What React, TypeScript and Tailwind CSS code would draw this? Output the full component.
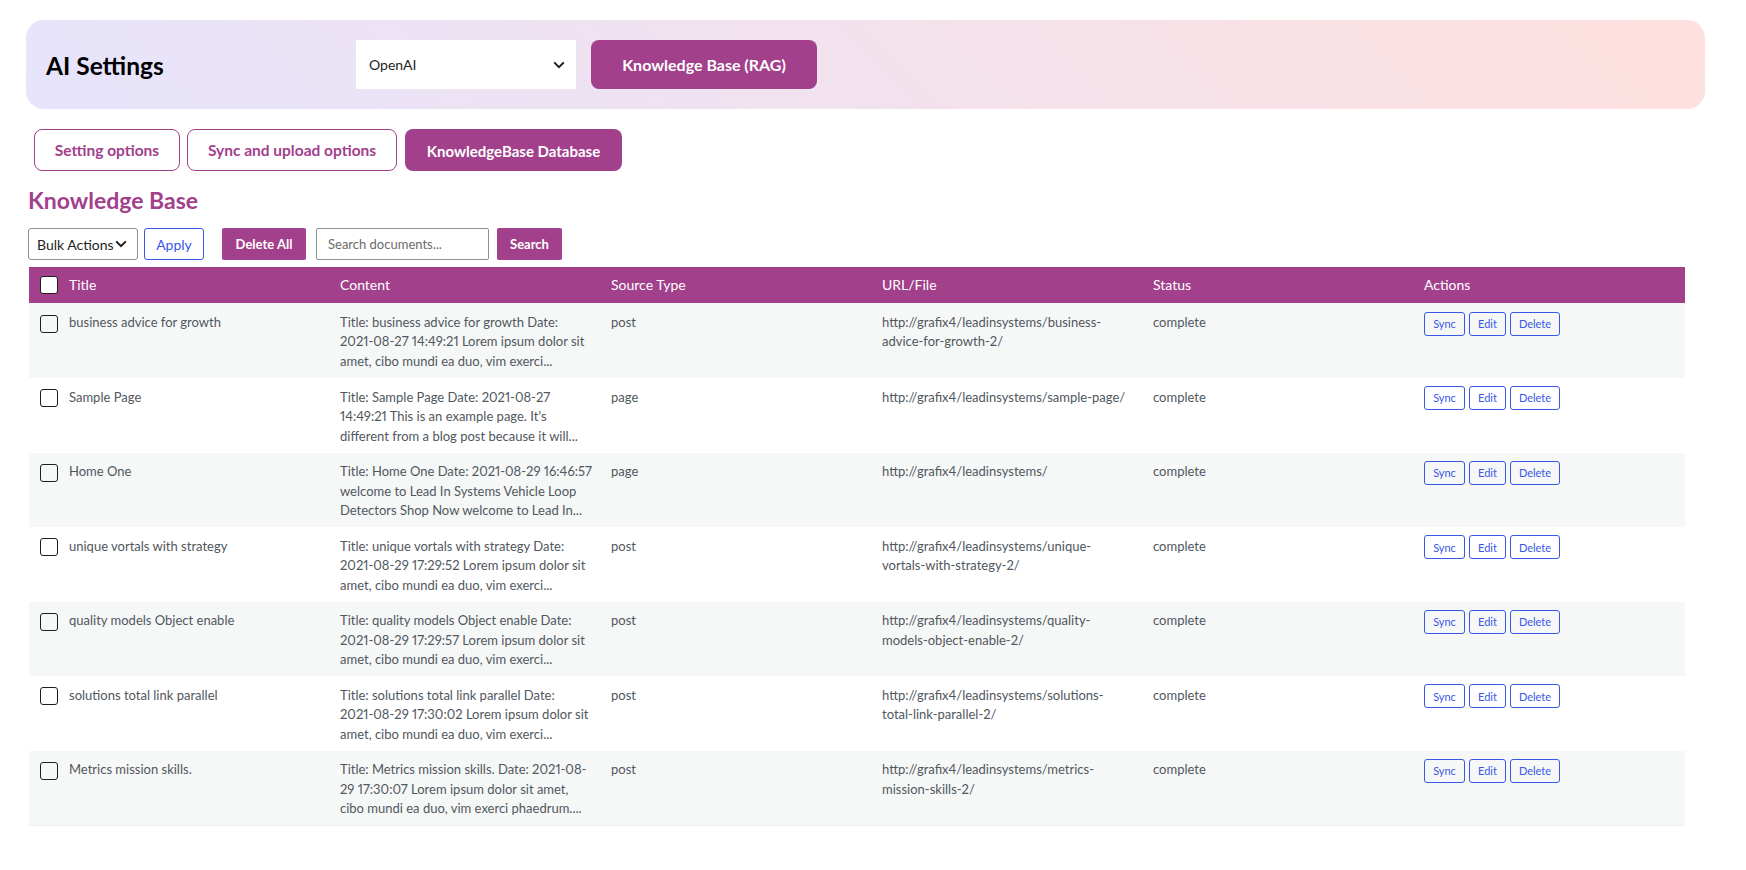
import React from "react";

const rows = [
  {
    title: "business advice for growth",
    content: ["Title: business advice for growth Date:", "2021-08-27 14:49:21 Lorem ipsum dolor sit", "amet, cibo mundi ea duo, vim exerci..."],
    type: "post",
    url: ["http://grafix4/leadinsystems/business-", "advice-for-growth-2/"],
  },
  {
    title: "Sample Page",
    content: ["Title: Sample Page Date: 2021-08-27", "14:49:21 This is an example page. It's", "different from a blog post because it will..."],
    type: "page",
    url: ["http://grafix4/leadinsystems/sample-page/"],
  },
  {
    title: "Home One",
    content: ["Title: Home One Date: 2021-08-29 16:46:57", "welcome to Lead In Systems Vehicle Loop", "Detectors Shop Now welcome to Lead In..."],
    type: "page",
    url: ["http://grafix4/leadinsystems/"],
  },
  {
    title: "unique vortals with strategy",
    content: ["Title: unique vortals with strategy Date:", "2021-08-29 17:29:52 Lorem ipsum dolor sit", "amet, cibo mundi ea duo, vim exerci..."],
    type: "post",
    url: ["http://grafix4/leadinsystems/unique-", "vortals-with-strategy-2/"],
  },
  {
    title: "quality models Object enable",
    content: ["Title: quality models Object enable Date:", "2021-08-29 17:29:57 Lorem ipsum dolor sit", "amet, cibo mundi ea duo, vim exerci..."],
    type: "post",
    url: ["http://grafix4/leadinsystems/quality-", "models-object-enable-2/"],
  },
  {
    title: "solutions total link parallel",
    content: ["Title: solutions total link parallel Date:", "2021-08-29 17:30:02 Lorem ipsum dolor sit", "amet, cibo mundi ea duo, vim exerci..."],
    type: "post",
    url: ["http://grafix4/leadinsystems/solutions-", "total-link-parallel-2/"],
  },
  {
    title: "Metrics mission skills.",
    content: ["Title: Metrics mission skills. Date: 2021-08-", "29 17:30:07 Lorem ipsum dolor sit amet,", "cibo mundi ea duo, vim exerci phaedrum...."],
    type: "post",
    url: ["http://grafix4/leadinsystems/metrics-", "mission-skills-2/"],
  },
];

const Chevron: React.FC<{ className: string }> = ({ className }) => (
  <svg viewBox="0 0 12 8" fill="none" stroke="currentColor" strokeWidth="2" className={className}>
    <path d="M1.2 1.4 6 6.2l4.8-4.8" />
  </svg>
);

const Checkbox: React.FC<{ white?: boolean }> = ({ white }) => (
  <span className={`block w-[18px] h-[18px] rounded-[3px] border border-[#1e1e1e] ${white ? "bg-white" : "bg-transparent"}`} />
);

const ActionButton: React.FC<{ label: string; width: string }> = ({ label, width }) => (
  <button className={`${width} h-6 rounded-[3px] border border-[#3858e9] bg-transparent text-[11px] text-[#3858e9] flex items-center justify-center`}>
    {label}
  </button>
);

export default function App() {
  return (
    <div className="min-h-[870px] bg-white pt-5 font-['Lato','Open_Sans',sans-serif]">
      <div className="ml-[26px] w-[1679px] h-[89px] rounded-[18px] bg-[linear-gradient(45deg,#e6e4fc,#ffe0de)] flex items-start pt-5 pl-[20px]">
        <h1 className="w-[310px] mt-[8px] text-[24.5px] leading-[36px] font-bold text-black">AI Settings</h1>
        <div className="w-[220px] h-[49px] bg-white flex items-center justify-between pl-[13px] pr-[11px] text-[14px] text-[#1e1e1e]">
          OpenAI
          <Chevron className="w-3 h-2 text-[#1e1e1e]" />
        </div>
        <button className="ml-[15px] w-[226px] h-[49px] pt-[1px] rounded-[8px] bg-[#a2408c] text-white text-[16px] font-bold">
          Knowledge Base (RAG)
        </button>
      </div>

      <div className="ml-[34px] mt-5 flex gap-[7px] text-[15.5px] font-bold">
        <button className="w-[146px] h-[42px] pt-[2px] rounded-[8px] border border-[#a2408c] text-[#a2408c] bg-white">Setting options</button>
        <button className="w-[210px] h-[42px] pt-[2px] rounded-[8px] border border-[#a2408c] text-[#a2408c] bg-white">Sync and upload options</button>
        <button className="ml-[1px] w-[217px] h-[42px] pt-[2px] rounded-[8px] bg-[#a2408c] text-white text-[15px]">KnowledgeBase Database</button>
      </div>

      <h2 className="ml-[28px] mt-[13px] text-[23px] leading-[32px] font-bold text-[#a2408c]">Knowledge Base</h2>

      <div className="ml-[28px] mt-[12px] flex items-stretch h-8 text-[14px]">
        <div className="w-[110px] rounded-[3px] border border-[#8c8f94] flex items-center justify-between pl-[8px] pr-[10px] text-[#1e1e1e]">
          Bulk Actions
          <Chevron className="w-3 h-2 text-[#1e1e1e]" />
        </div>
        <button className="ml-[6px] w-[60px] rounded-[3px] border border-[#3858e9] text-[#3858e9]">Apply</button>
        <button className="ml-[18px] w-[84px] pt-[2px] rounded-[2px] bg-[#a2408c] text-white font-bold text-[13px]">Delete All</button>
        <div className="ml-[10px] w-[173px] pt-[2px] rounded-[2px] border border-[#8c8f94] flex items-center pl-[11px] text-[13px] text-[#6b6b6b]">
          Search documents...
        </div>
        <button className="ml-2 w-[65px] pt-[2px] rounded-[2px] bg-[#a2408c] text-white font-bold text-[13px]">Search</button>
      </div>

      <table className="ml-[29px] mt-[7px] w-[1656px] table-fixed border-collapse text-[13px] leading-[19.5px] text-[#50575e] border-b border-[#f0f0f1] proportional-nums">
        <colgroup>
          <col className="w-[300px]" />
          <col className="w-[271px]" />
          <col className="w-[271px]" />
          <col className="w-[271px]" />
          <col className="w-[271px]" />
          <col className="w-[272px]" />
        </colgroup>
        <thead>
          <tr className="h-[36.4px] bg-[#a2408c] text-white text-left text-[14px]">
            <th className="pl-[11px] font-normal">
              <div className="flex items-center gap-[11px]">
                <Checkbox white />
                Title
              </div>
            </th>
            <th className="pl-[11px] font-normal">Content</th>
            <th className="pl-[11px] font-normal">Source Type</th>
            <th className="pl-[11px] font-normal">URL/File</th>
            <th className="pl-[11px] font-normal">Status</th>
            <th className="pl-[11px] font-normal">Actions</th>
          </tr>
        </thead>
        <tbody>
          {rows.map((row, index) => (
            <tr key={index} className={index % 2 === 0 ? "bg-[#f6f7f7]" : "bg-white"}>
              <td className="pl-[11px] pt-[9.6px] pb-[6.47px] align-top">
                <div className="flex items-start gap-[11px]">
                  <span className="mt-[1.6px]">
                    <Checkbox />
                  </span>
                  {row.title}
                </div>
              </td>
              <td className="pl-[11px] pt-[9.6px] pb-[6.47px] align-top whitespace-nowrap">
                {row.content.map((line) => (
                  <div key={line}>{line}</div>
                ))}
              </td>
              <td className="pl-[11px] pt-[9.6px] pb-[6.47px] align-top">{row.type}</td>
              <td className="pl-[11px] pt-[9.6px] pb-[6.47px] align-top whitespace-nowrap">
                {row.url.map((line) => (
                  <div key={line}>{line}</div>
                ))}
              </td>
              <td className="pl-[11px] pt-[9.6px] pb-[6.47px] align-top">complete</td>
              <td className="pl-[11px] pt-[8.2px] align-top">
                <div className="flex gap-1">
                  <ActionButton label="Sync" width="w-[41px]" />
                  <ActionButton label="Edit" width="w-[37px]" />
                  <ActionButton label="Delete" width="w-[50px]" />
                </div>
              </td>
            </tr>
          ))}
        </tbody>
      </table>
    </div>
  );
}
